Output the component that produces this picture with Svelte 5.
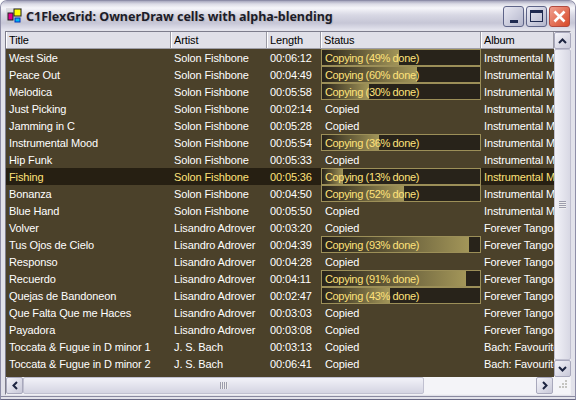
<script>
  const sf = 'Solon Fishbone', la = 'Lisandro Adrover', js = 'J. S. Bach';
  const im = 'Instrumental Music', ft = 'Forever Tango', bf = 'Bach: Favourites';
  const rows = [
    ['West Side', sf, '00:06:12', 49, im],
    ['Peace Out', sf, '00:04:49', 60, im],
    ['Melodica', sf, '00:05:58', 30, im],
    ['Just Picking', sf, '00:02:14', 0, im],
    ['Jamming in C', sf, '00:05:28', 0, im],
    ['Instrumental Mood', sf, '00:05:54', 36, im],
    ['Hip Funk', sf, '00:05:33', 0, im],
    ['Fishing', sf, '00:05:36', 13, im],
    ['Bonanza', sf, '00:04:50', 52, im],
    ['Blue Hand', sf, '00:05:50', 0, im],
    ['Volver', la, '00:03:20', 0, ft],
    ['Tus Ojos de Cielo', la, '00:04:39', 93, ft],
    ['Responso', la, '00:04:28', 0, ft],
    ['Recuerdo', la, '00:04:11', 91, ft],
    ['Quejas de Bandoneon', la, '00:02:47', 43, ft],
    ['Que Falta Que me Haces', la, '00:03:03', 0, ft],
    ['Payadora', la, '00:03:08', 0, ft],
    ['Toccata & Fugue in D minor 1', js, '00:03:13', 0, bf],
    ['Toccata & Fugue in D minor 2', js, '00:06:41', 0, bf],
    ['Violin Sonata No 2 in G Minor', js, '00:05:18', 0, bf]
  ];
  const heads = ['Title', 'Artist', 'Length', 'Status', 'Album'];
</script>

<div class="window">
  <div class="titlebar">
    <svg class="appicon" width="16" height="16" viewBox="0 0 16 16">
      <rect x="0" y="0" width="16" height="16" fill="#c8c8cc" opacity=".5"/>
      <rect x="2" y="5" width="5" height="7" fill="#e0008c" stroke="#222" stroke-width="1"/>
      <rect x="8" y="1" width="7" height="7" fill="#ffff00" stroke="#222" stroke-width="1"/>
      <rect x="9" y="10" width="5" height="4" fill="#00b8f0" stroke="#0030c0" stroke-width="1"/>
    </svg>
    <span class="title">C1FlexGrid: OwnerDraw cells with alpha-blending</span>
    <div class="buttons">
      <div class="wbtn"><span class="min"></span></div>
      <div class="wbtn"><span class="max"></span></div>
      <div class="wbtn close">
        <svg width="21" height="21" viewBox="0 0 21 21"><path d="M5.5 5.5 15.5 15.5M15.5 5.5 5.5 15.5" stroke="#fff" stroke-width="2.6"/></svg>
      </div>
    </div>
  </div>
  <div class="client">
    <div class="grid">
      <div class="main">
        <div class="gridview">
          <div class="row head">
            {#each heads as h}<div class="cell">{h}</div>{/each}
          </div>
          {#each rows as r, i}
            <div class="row" class:sel={i === 7}>
              <div class="cell">{r[0]}</div>
              <div class="cell">{r[1]}</div>
              <div class="cell">{r[2]}</div>
              {#if r[3]}
                <div class="cell status prog">
                  <div class="bar" style="width:{r[3]}%"></div>
                  <span>Copying ({r[3]}% done)</span>
                </div>
              {:else}
                <div class="cell status">Copied</div>
              {/if}
              <div class="cell">{r[4]}</div>
            </div>
          {/each}
        </div>
        <div class="vscroll">
          <div class="sbtn"><svg width="9" height="6" viewBox="0 0 9 6"><path d="M1 5 4.5 1.5 8 5" fill="none" stroke="#1c2440" stroke-width="2"/></svg></div>
          <div class="vthumb"><span class="grip-h"></span></div>
          <div class="sbtn"><svg width="9" height="6" viewBox="0 0 9 6"><path d="M1 1 4.5 4.5 8 1" fill="none" stroke="#1c2440" stroke-width="2"/></svg></div>
        </div>
      </div>
      <div class="hscroll">
        <div class="sbtn"><svg width="6" height="9" viewBox="0 0 6 9"><path d="M5 1 1.5 4.5 5 8" fill="none" stroke="#1c2440" stroke-width="2"/></svg></div>
        <div class="hthumb"><span class="grip-v"></span></div>
        <div class="htrack"></div>
        <div class="sbtn"><svg width="6" height="9" viewBox="0 0 6 9"><path d="M1 1 4.5 4.5 1 8" fill="none" stroke="#1c2440" stroke-width="2"/></svg></div>
        <div class="corner">
          <svg width="17" height="17" viewBox="0 0 17 17" fill="#c4c4c0">
            <rect x="12" y="3" width="2" height="2"/><rect x="9" y="6" width="2" height="2"/><rect x="12" y="6" width="2" height="2"/>
            <rect x="6" y="9" width="2" height="2"/><rect x="9" y="9" width="2" height="2"/><rect x="12" y="9" width="2" height="2"/>
          </svg>
        </div>
      </div>
    </div>
  </div>
</div>

<style>
  :global(body) { margin: 0; background: #fff; }
  .window {
    width: 576px; height: 400px; box-sizing: border-box; overflow: hidden;
    display: flex; flex-direction: column;
    background: #e2e2ea;
    border: 1px solid #8e8ea8; border-bottom-color: #6a6a86;
    border-radius: 7px 7px 0 0;
    font-family: "Liberation Sans", sans-serif;
  }
  .titlebar {
    height: 29px; flex: none; box-sizing: border-box; display: flex; align-items: center;
    padding: 1px 5px 0 5px;
    background: linear-gradient(#a9a9bf 0, #dcdce6 3px, #f6f6fa 7px, #d8d8e4 14px, #c6c6d6 22px, #e4e4ee 29px);
  }
  .appicon { flex: none; }
  .title {
    margin-left: 4px; font: bold 12.5px "Noto Sans", sans-serif; color: #1c1c28;
    white-space: nowrap; flex: 1;
    text-shadow: 1px 1px 1px #b8b8c4;
  }
  .buttons { display: flex; gap: 2px; }
  .wbtn {
    width: 21px; height: 21px; box-sizing: border-box; border: 1px solid #5e6488; border-radius: 3px;
    background: linear-gradient(135deg, #e8e8f2, #b4b6cc);
    position: relative; display: flex; align-items: center; justify-content: center;
  }
  .close { background: linear-gradient(135deg, #f0a090, #d84828); border-color: #b04a40; }
  .close svg { position: absolute; left: -1px; top: -1px; }
  .min { position: absolute; left: 6px; bottom: 3px; width: 8px; height: 3px; background: #1f2a50; }
  .max { width: 13px; height: 12px; box-sizing: border-box; border: 1px solid #1f2a50; border-top-width: 3px; }
  .client {
    flex: 1; min-height: 0; padding: 1px 4px 1px 4px; display: flex;
    margin-bottom: 2px; border-bottom: 1px solid #8a8aa0;
  }
  .grid {
    flex: 1; min-width: 0; display: flex; flex-direction: column;
    border: 1px solid #7d7d8c; border-right-color: #f0f0f4; border-bottom-color: #f0f0f4;
  }
  .main { flex: 1; min-height: 0; display: flex; }
  .gridview { flex: none; width: 548px; overflow: hidden; background: #4b412a; }
  .row {
    display: grid; grid-template-columns: 165px 96px 54px 160px 73px; height: 17px;
    color: #fff; font-size: 11px; letter-spacing: -.12px;
  }
  .cell {
    box-sizing: border-box; padding: 1px 0 0 3px; line-height: 16px;
    white-space: nowrap; overflow: hidden; position: relative;
  }
  .head { background: #e0e0e8; color: #000; height: 16px; border-bottom: 1px solid #9e9ea8; box-sizing: content-box; }
  .head .cell { border-right: 1px solid #9a9aa4; border-left: 1px solid #fff; line-height: 16px; padding: 0 0 0 2px; }
  .sel { background: #261f12; color: #ffe27a; }
  .status { padding-left: 4px; }
  .prog {
    background: #28231a; border: 1px solid #9c8f58; color: #ffe27a;
    line-height: 15px; padding: 1px 0 0 3px; letter-spacing: -.35px;
  }
  .prog span { position: relative; }
  .bar {
    position: absolute; left: 0; top: 0; bottom: 0;
    background: linear-gradient(to right, #28231a, #a39659);
  }
  .vscroll {
    flex: none; width: 17px; display: flex; flex-direction: column; background: #f4f4f8;
  }
  .sbtn {
    flex: none; width: 17px; height: 17px; box-sizing: border-box; display: flex; align-items: center; justify-content: center;
    border: 1px solid #a8a8bc; border-radius: 2px;
    background: linear-gradient(135deg, #f4f4fa, #c8c8d8);
  }
  .vthumb {
    flex: 1; min-height: 0; box-sizing: border-box; border: 1px solid #c0c0d0; border-radius: 2px;
    background: linear-gradient(to right, #f2f2f8, #d8d8e4);
    display: flex; align-items: center; justify-content: center;
  }
  .grip-h { width: 7px; height: 8px; background: repeating-linear-gradient(#9c9cac 0 1px, #eee 1px 2px); }
  .hscroll { flex: none; height: 17px; display: flex; background: #f4f4f8; }
  .hthumb {
    flex: none; width: 401px; box-sizing: border-box; border: 1px solid #c0c0d0; border-radius: 2px;
    background: linear-gradient(#f2f2f8, #d4d4e2); display: flex; align-items: center; justify-content: center;
  }
  .grip-v { width: 8px; height: 7px; background: repeating-linear-gradient(to right, #9c9cac 0 1px, #eee 1px 2px); }
  .htrack { flex: 1; }
  .corner { flex: none; width: 17px; height: 17px; }
</style>
